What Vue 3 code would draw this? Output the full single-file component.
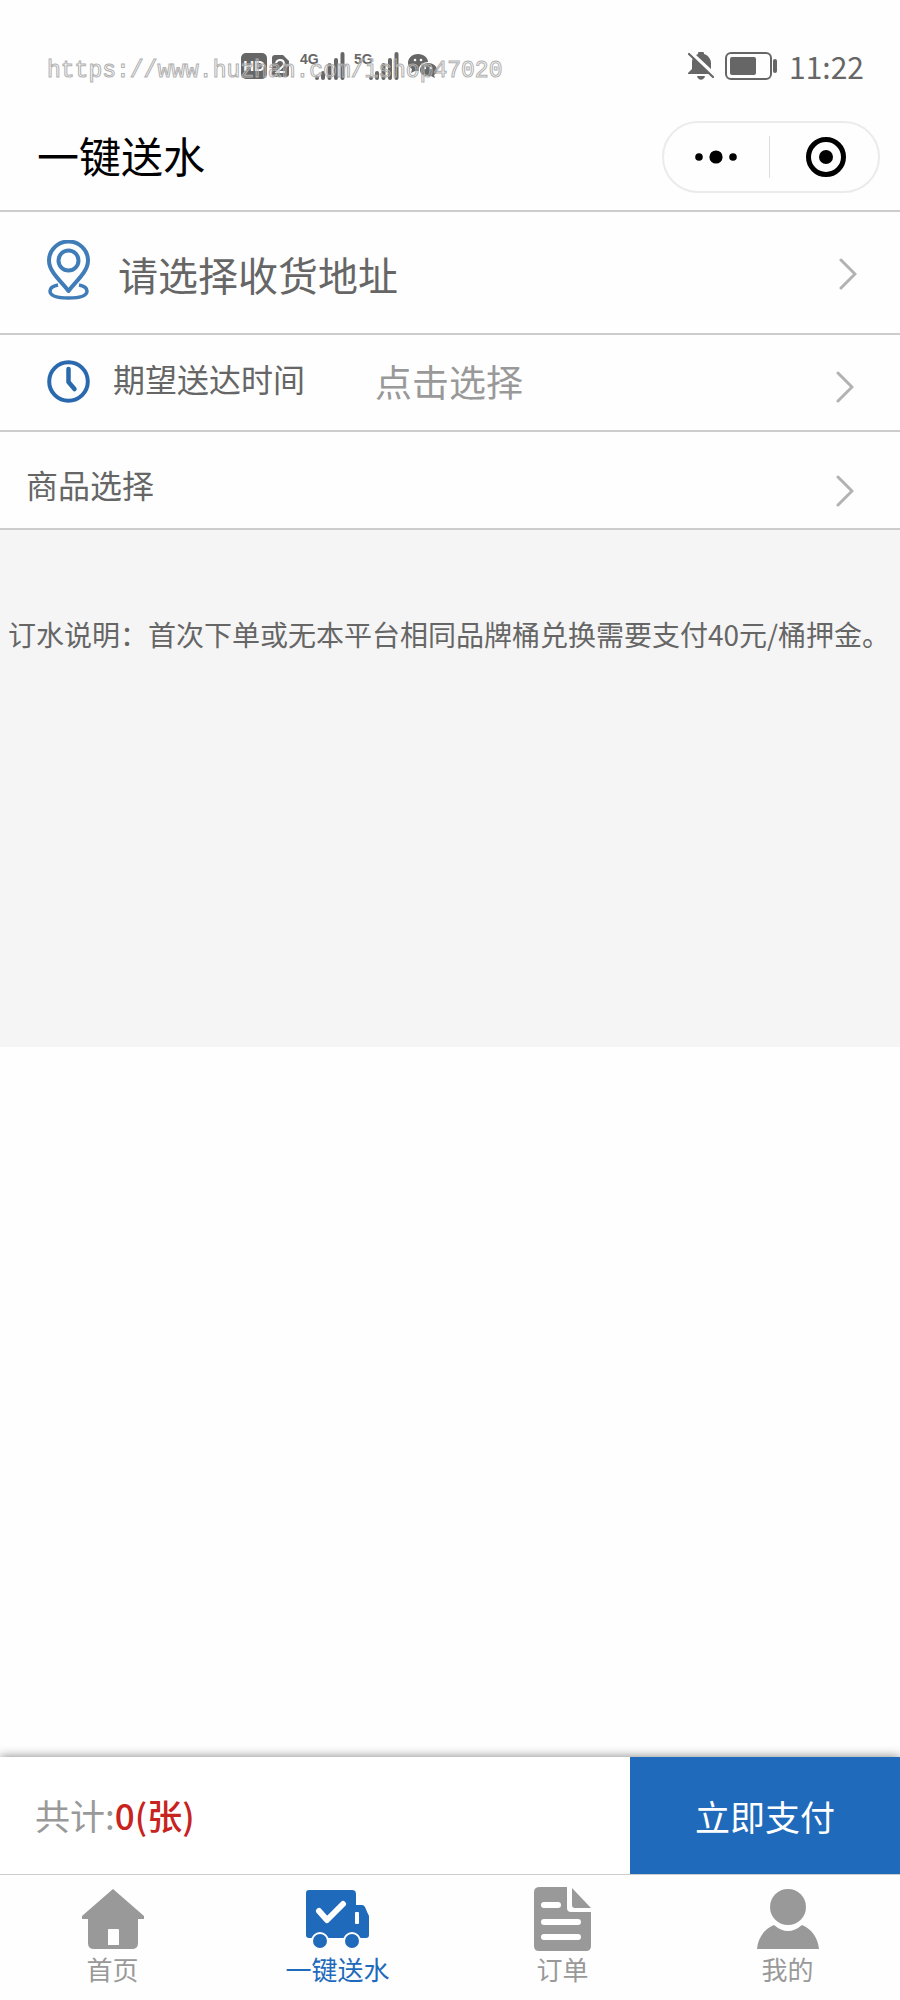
<script setup>
    import { ref } from 'vue';

    const total = ref(0);
    const active = ref('water');

    const signals = ref([
        { name: '4G' },
        { name: '5G' },
    ]);

    const tabs = ref([
        { key: 'home', title: '首页' },
        { key: 'water', title: '一键送水' },
        { key: 'order', title: '订单' },
        { key: 'mine', title: '我的' },
    ]);
</script>


<template>
    <div class="page">
        <div class="status">
            <div class="status-left">
                <span class="hd">HD</span>
                <svg class="sim" viewBox="0 0 17 22">
                    <path d="M3 0h8l6 6v13a3 3 0 0 1-3 3H3a3 3 0 0 1-3-3V3a3 3 0 0 1 3-3z" fill="#666" />
                    <path d="M4 8q1-3 4-3 4 0 4 4 0 2-3 4l-4 4h8" fill="none" stroke="#fff" stroke-width="2" />
                </svg>
                <div v-for="signal in signals" :key="signal.name" class="signal">
                    <span>{{ signal.name }}</span>
                    <svg viewBox="0 0 30 28">
                        <path d="M2 26v0M8 26v-5M14.500 26V13M21 26V8M27.500 26V2" stroke="#666" stroke-width="4" stroke-linecap="round" />
                    </svg>
                </div>
                <svg class="wechat" viewBox="0 0 30 24">
                    <path d="M10 0c6 0 10 4 10 8-6 0-10 4-9 9l-4 0-4 2 1-4C1 13 0 11 0 9 0 4 4 0 10 0z" fill="#666" />
                    <path d="M20 9c5 0 9 3 9 7 0 2-1 4-3 5l1 3-4-2c-7 1-11-2-11-6s4-7 8-7z" fill="#666" />
                    <g fill="#fff">
                        <circle cx="7" cy="6" r="1.300" />
                        <circle cx="13" cy="6" r="1.300" />
                        <circle cx="17" cy="14" r="1.200" />
                        <circle cx="23" cy="14" r="1.200" />
                    </g>
                </svg>
            </div>
            <div class="status-right">
                <svg class="bell" viewBox="0 0 26 28">
                    <path d="M10 2a3 3 0 0 1 6 0c4 1 7 5 7 9v6L8 3zM5 6l17 16H0v-1l4-4v-6c0-2 0-3 1-5zM9 24h8c-1 5-7 5-8 0z" fill="#666" />
                    <path d="M1 2l24 23" stroke="#666" stroke-width="2.200" stroke-linecap="round" />
                </svg>
                <svg class="battery" viewBox="0 0 52 28">
                    <rect x="1" y="1" width="45" height="26" rx="5" fill="none" stroke="#666" stroke-width="2" />
                    <rect x="5" y="5" width="26" height="18" rx="2" fill="#666" />
                    <rect x="48" y="7" width="4" height="14" rx="2" fill="#666" />
                </svg>
                <time>11:22</time>
            </div>
            <p class="watermark">https://www.huzhan.com/ishop47020</p>
        </div>

        <header class="nav">
            <h1>一键送水</h1>
            <div class="capsule">
                <button type="button" aria-label="更多">
                    <svg class="dots" viewBox="0 0 42 14">
                        <circle cx="4" cy="7" r="3.800" />
                        <circle cx="21" cy="7" r="6.600" />
                        <circle cx="38" cy="7" r="3.800" />
                    </svg>
                </button>
                <button type="button" class="close" aria-label="关闭">
                    <svg class="target" viewBox="0 0 40 40">
                        <circle cx="20" cy="20" r="17.500" fill="none" stroke="#000" stroke-width="5" />
                        <circle cx="20" cy="20" r="7" />
                    </svg>
                </button>
            </div>
        </header>

        <main>
            <button type="button" class="row address">
                <svg class="pin" viewBox="0 0 43 60" fill="none" stroke="#3f7cb8" stroke-width="4">
                    <path d="M21.500 51C14 41 2 32 2 20.500a19.500 19 0 0 1 39 0C41 32 29 41 21.500 51z" stroke-linejoin="round" />
                    <circle cx="21.500" cy="20.500" r="10" />
                    <path d="M11 45c-5 1-8 3-8 6 0 5 8 7 18.500 7S40 56 40 51c0-3-3-5-8-6" stroke-width="3.500" />
                </svg>
                <span class="name">请选择收货地址</span>
                <svg class="arrow" viewBox="0 0 18 32"><path d="M2 2l14 14L2 30" /></svg>
            </button>
            <button type="button" class="row time">
                <svg class="clock" viewBox="0 0 43 43" fill="none" stroke="#2a69ae" stroke-width="4">
                    <circle cx="21.500" cy="21.500" r="19.300" />
                    <path d="M21.500 9v13l6 7" stroke-width="4.500" stroke-linecap="round" stroke-linejoin="round" />
                </svg>
                <span class="name">期望送达时间</span>
                <span class="choose">点击选择</span>
                <svg class="arrow" viewBox="0 0 18 32"><path d="M2 2l14 14L2 30" /></svg>
            </button>
            <button type="button" class="row goods">
                <span class="name">商品选择</span>
                <svg class="arrow" viewBox="0 0 18 32"><path d="M2 2l14 14L2 30" /></svg>
            </button>
            <div class="notice">
                <p>订水说明：首次下单或无本平台相同品牌桶兑换需要支付40元/桶押金。</p>
            </div>
        </main>

        <footer>
            <div class="pay">
                <p>共计:<span>{{ total }}(张)</span></p>
                <button type="button">立即支付</button>
            </div>
            <nav class="tabs">
                <a v-for="tab in tabs" :key="tab.key" href="#" :class="{ on: tab.key === active }" @click.prevent="active = tab.key">
                    <svg v-if="tab.key === 'home'" viewBox="0 0 64 64" fill="currentColor">
                        <path fill-rule="evenodd" d="M32 2l31 27v3h-6v24q0 6-6 6H13q-6 0-6-6V32H1v-3zM28 42q-1 0-1 1v15h11V43q0-1-1-1z" />
                    </svg>
                    <svg v-else-if="tab.key === 'water'" viewBox="0 0 64 64" fill="currentColor">
                        <path d="M3 3h43q4 0 4 4v11h6q2 0 3 2l3 7q1 1 1 3v18q0 3-3 3H3q-3 0-3-3V6q0-3 3-3z" />
                        <circle cx="14" cy="54" r="8" stroke="#fff" stroke-width="2" />
                        <circle cx="46" cy="54" r="8" stroke="#fff" stroke-width="2" />
                        <path d="M13 24l8 9 16-16" fill="none" stroke="#fff" stroke-width="6" stroke-linecap="round" stroke-linejoin="round" />
                        <rect x="49" y="25" width="4" height="12" rx="1" fill="#fff" />
                    </svg>
                    <svg v-else-if="tab.key === 'order'" viewBox="0 0 64 64">
                        <path d="M9 0h51v59q0 5-5 5H8q-5 0-5-5V5q0-5 6-5z" fill="currentColor" />
                        <path d="M36 0h25v25H40q-4 0-4-4z" fill="#fefefe" />
                        <path d="M41 1l19 20H44q-3 0-3-3z" fill="currentColor" />
                        <path d="M13 18h14M13 35h34M13 50h34" stroke="#fff" stroke-width="6" stroke-linecap="round" />
                    </svg>
                    <svg v-else viewBox="0 0 64 64" fill="currentColor">
                        <circle cx="32" cy="20" r="18" />
                        <path d="M18 38q14 12 28 0c10 4 16 13 17 24H1C2 51 8 42 18 38z" />
                    </svg>
                    <span>{{ tab.title }}</span>
                </a>
            </nav>
        </footer>
    </div>
</template>

<style>
body {
    margin: 0;
    background: #fff;
}
</style>

<style scoped>
* {
    box-sizing: border-box;
    margin: 0;
    padding: 0;
}

.page {
    display: flex;
    flex-direction: column;
    min-height: 100vh;
    background: #fefefe;
    color: #666;
    font-family: "Noto Sans CJK SC", sans-serif;
}

button {
    border: 0;
    background: none;
    color: inherit;
    font: inherit;
    cursor: pointer;
}

svg {
    display: block;
    flex: none;
}

.status {
    position: relative;
    display: flex;
    justify-content: space-between;
    height: 104px;
    padding: 52px 36px 0 241px;
}

.status-left,
.status-right {
    display: flex;
    align-items: center;
    height: 28px;
}

.hd {
    width: 26px;
    margin-right: 5px;
    border-radius: 5px;
    background: #666;
    color: #fff;
    font: bold 15px/26px "Liberation Sans", sans-serif;
    text-align: center;
}

.sim {
    width: 17px;
    height: 22px;
    margin-right: 11px;
}

.signal {
    display: flex;
    align-items: flex-start;
    width: 54px;
}

.signal span {
    width: 15px;
    font: bold 14px/14px "Liberation Sans Narrow", "Liberation Sans", sans-serif;
}

.signal svg {
    width: 30px;
    height: 28px;
}

.wechat {
    width: 30px;
    height: 24px;
}

.status-right time {
    margin-left: 12px;
    font-size: 30px;
    line-height: 28px;
}

.bell {
    width: 26px;
    height: 28px;
    margin-right: 11px;
}

.battery {
    width: 52px;
    height: 28px;
}

.watermark {
    position: absolute;
    top: 56px;
    left: 47px;
    color: #fff;
    font: 23px/30px "Liberation Mono", monospace;
    white-space: nowrap;
    -webkit-text-stroke: 1px #b0b0b0;
    -webkit-text-fill-color: transparent;
}

.nav {
    display: flex;
    align-items: center;
    justify-content: space-between;
    height: 108px;
    padding: 0 20px 0 37px;
    border-bottom: 2px solid #ccc;
}

h1 {
    padding-bottom: 4px;
    color: #000;
    font-size: 42px;
    font-weight: 400;
    line-height: 60px;
}

.capsule {
    display: flex;
    align-items: center;
    width: 218px;
    height: 72px;
    border: 2px solid #ebebeb;
    border-radius: 36px;
}

.capsule button {
    display: flex;
    flex: 1;
    align-items: center;
    justify-content: center;
    height: 42px;
}

.capsule .close {
    padding-left: 4px;
    border-left: 1px solid #ddd;
}

.dots {
    width: 42px;
    height: 14px;
}

.target {
    width: 40px;
    height: 40px;
}

main {
    flex: 1;
}

.row {
    display: flex;
    align-items: flex-start;
    width: 100%;
    border-bottom: 2px solid #ccc;
    text-align: left;
}

.name {
    font-size: 32px;
    line-height: 36px;
}

.arrow {
    align-self: flex-end;
    width: 18px;
    height: 32px;
    margin-left: auto;
    fill: none;
    stroke: #b2b2b2;
    stroke-width: 3;
    stroke-linecap: round;
}

.address {
    padding: 28px 43px 25px 47px;
}

.address .name {
    margin-left: 28px;
    font-size: 40px;
    line-height: 68px;
}

.address .arrow {
    align-self: center;
}

.pin {
    width: 43px;
    height: 60px;
}

.time {
    padding: 25px 46px 27px 47px;
}

.clock {
    width: 43px;
    height: 43px;
}

.time .name {
    margin-left: 23px;
}

.choose {
    margin-left: 70px;
    color: #999;
    font-size: 37px;
    line-height: 43px;
}

.goods {
    padding: 34px 46px 21px 26px;
}

.goods .arrow {
    margin-top: 9px;
}

.notice {
    min-height: 517px;
    padding: 84px 0 84px 8px;
    background: #f5f5f5;
}

.notice p {
    font-size: 28px;
    line-height: 40px;
}

.pay {
    display: flex;
    justify-content: space-between;
    height: 117px;
    background: #fff;
    box-shadow: 0 0 10px rgba(0, 0, 0, 0.5);
    clip-path: inset(-12px 0 0 0);
    font-size: 35px;
    line-height: 116px;
}

.pay p {
    padding-left: 35px;
    color: #999;
}

.pay span {
    color: #c7231f;
    font-weight: 500;
}

.pay button {
    width: 30%;
    background: #1f6aba;
    color: #fff;
}

.tabs {
    display: flex;
    height: 126px;
    border-top: 1px solid #ccc;
    background: #fefefe;
}

.tabs a {
    display: flex;
    flex: 1;
    flex-direction: column;
    align-items: center;
    padding-top: 12px;
    color: #999;
    font-size: 26px;
    line-height: 36px;
    text-decoration: none;
}

.tabs svg {
    width: 64px;
    height: 64px;
}

.tabs .on {
    color: #1f6aba;
}
</style>
